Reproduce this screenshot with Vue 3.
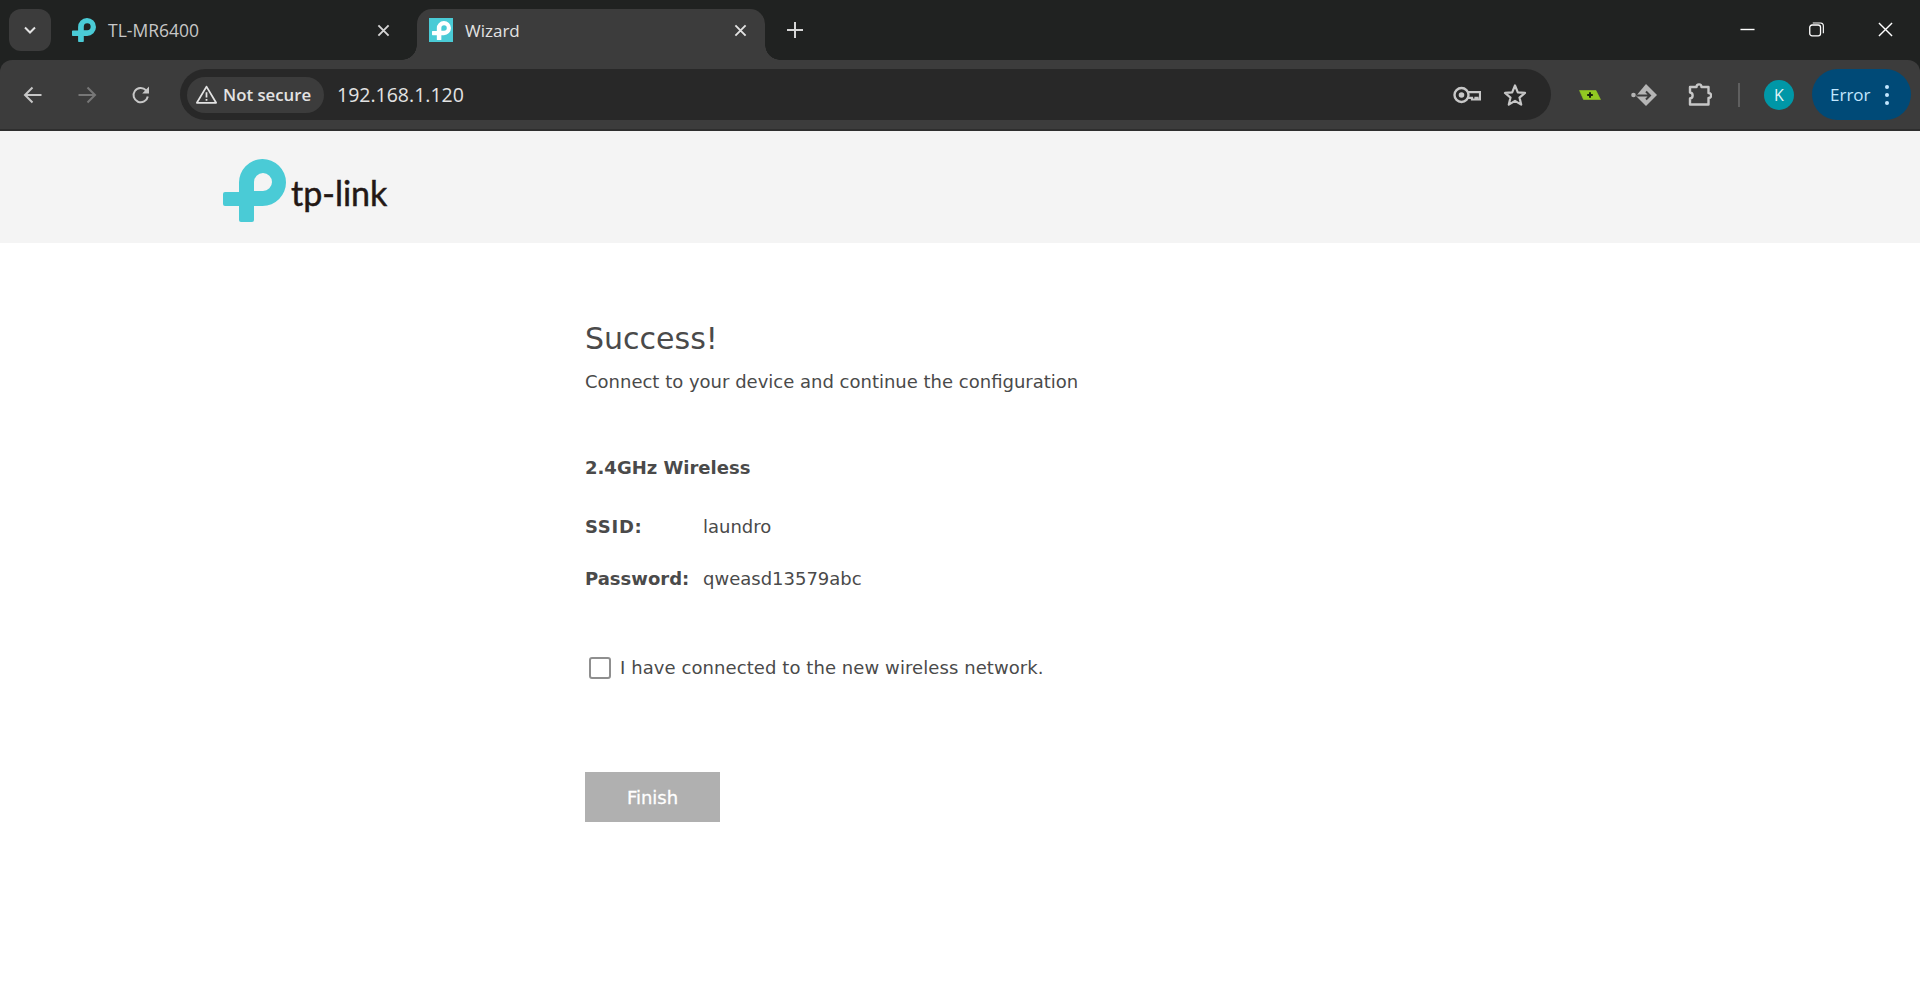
<script setup>
const logoPath = 'M16 24A23.5 23.5 0 1 1 39.5 47H31V61Q31 63 29 63H18Q16 63 16 61V47H2Q0 47 0 45V35Q0 33 2 33H16ZM31 32H40A9 9 0 1 0 31 23Z'
</script>

<template>
  <div class="app">
    <div class="chrome">
      <div class="tabstrip">
        <button class="tabsearch">
          <svg width="16" height="16" viewBox="0 0 16 16"><path d="M3 5.5 8 10.5 13 5.5" fill="none" stroke="#e3e3e3" stroke-width="2"/></svg>
        </button>
        <div class="tab first">
          <svg class="fav" viewBox="0 0 63 63"><path :d="logoPath" fill="#4acbd6" fill-rule="evenodd"/></svg>
          <span class="tabtitle">TL-MR6400</span>
          <svg class="tabclose" viewBox="0 0 14 14"><path d="M1.5 1.5 12.5 12.5M12.5 1.5 1.5 12.5" stroke="#d6d6d6" stroke-width="2"/></svg>
        </div>
        <div class="tab active">
          <span class="favbox">
            <svg viewBox="0 0 63 63"><path :d="logoPath" fill="#fff" fill-rule="evenodd"/></svg>
          </span>
          <span class="tabtitle">Wizard</span>
          <svg class="tabclose" viewBox="0 0 14 14"><path d="M1.5 1.5 12.5 12.5M12.5 1.5 1.5 12.5" stroke="#e3e3e3" stroke-width="2"/></svg>
        </div>
        <svg class="newtab" viewBox="0 0 16 16"><path d="M8 0V16M0 8H16" stroke="#d6d6d6" stroke-width="2"/></svg>
        <div class="winctl">
          <svg viewBox="0 0 16 16"><path d="M0.5 8H15.5" stroke="#fff" stroke-width="1.5"/></svg>
          <svg viewBox="0 0 16 16"><rect x="0.8" y="3.2" width="11.5" height="11.5" rx="2.5" fill="none" stroke="#fff" stroke-width="1.4"/><path d="M4 1H12.5A3 3 0 0 1 15.3 4V12" fill="none" stroke="#fff" stroke-width="1.2"/></svg>
          <svg viewBox="0 0 16 16"><path d="M1 1 15 15M15 1 1 15" stroke="#fff" stroke-width="1.5"/></svg>
        </div>
      </div>

      <div class="toolbar">
        <svg class="nav" viewBox="0 0 20 20"><path d="M18.5 10H2M9.5 2.5 2 10 9.5 17.5" fill="none" stroke="#c7c7c7" stroke-width="2"/></svg>
        <svg class="nav" viewBox="0 0 20 20"><path d="M1.5 10H18M10.5 2.5 18 10 10.5 17.5" fill="none" stroke="#777" stroke-width="2"/></svg>
        <svg class="nav" viewBox="0 0 20 20"><path d="M16.8 11.5A7.2 7.2 0 1 1 15 5.2L17.2 7.4" fill="none" stroke="#c7c7c7" stroke-width="2"/><path d="M18 1.5V8.4H11.2Z" fill="#c7c7c7"/></svg>
        <div class="omnibox">
          <div class="chip">
            <svg width="23" height="21" viewBox="0 0 26 24"><path d="M13 3 24 21.5H2Z" fill="none" stroke="#e3e3e3" stroke-width="2" stroke-linejoin="round"/><path d="M13 9.5V15.5M13 17V19" stroke="#e3e3e3" stroke-width="2"/></svg>
            <span>Not secure</span>
          </div>
          <span class="url">192.168.1.120</span>
          <svg class="key" viewBox="0 0 28 20"><circle cx="8.5" cy="10" r="7" fill="none" stroke="#c7c7c7" stroke-width="2.4"/><circle cx="8.5" cy="10" r="2.8" fill="#c7c7c7"/><path d="M15 7.2H27V14.5H24.5V12.8H22.5V14.5H19V12.8H15" fill="none" stroke="#c7c7c7" stroke-width="2.2"/></svg>
          <svg class="star" viewBox="0 0 24 24"><path d="M12 2.5 14.8 9.3 22 9.9 16.5 14.6 18.2 21.6 12 17.9 5.8 21.6 7.5 14.6 2 9.9 9.2 9.3Z" fill="none" stroke="#c7c7c7" stroke-width="2.2" stroke-linejoin="round"/></svg>
        </div>
        <svg class="ext green" viewBox="0 0 22 10"><path d="M0.5 0.5H17L21.5 9.5H4.5Z" fill="#92c822" stroke="#92c822" stroke-width="0.6" stroke-linejoin="round"/><path d="M11 2.2V7.8M8.2 5H13.8" stroke="#16200c" stroke-width="2"/></svg>
        <svg class="ext diamond" viewBox="0 0 26 24"><circle cx="2.5" cy="12" r="2.3" fill="#b5b5b5"/><path d="M15 1 26 12 15 23 5 13Z" fill="#b5b5b5"/><path d="M5.5 12.5H18.5M15 8.5 19 12.5 15 16.5" fill="none" stroke="#3c3c3c" stroke-width="2"/></svg>
        <svg class="ext puzzle" viewBox="0 0 24 24"><path d="M2 4H8.5C8.5 0.5 13.5 0.5 13.5 4H20.5V10C24 10 24 15 20.5 15V21.5H2V15.5C5.5 15 5.5 10 2 9.5Z" fill="none" stroke="#c7c7c7" stroke-width="2.4" stroke-linejoin="round"/></svg>
        <span class="sep"></span>
        <span class="avatar">K</span>
        <div class="error">
          <span>Error</span>
          <span class="dots"><i></i><i></i><i></i></span>
        </div>
      </div>
    </div>

    <div class="page">
      <header class="pagehead">
        <svg class="logo" viewBox="0 0 63 63"><path :d="logoPath" fill="#4acbd6" fill-rule="evenodd"/></svg>
        <span class="wordmark">tp-link</span>
      </header>
      <main class="content">
        <h1>Success!</h1>
        <p class="sub">Connect to your device and continue the configuration</p>
        <h2>2.4GHz Wireless</h2>
        <div class="row ssid"><b>SSID:</b><span>laundro</span></div>
        <div class="row pass"><b>Password:</b><span>qweasd13579abc</span></div>
        <label class="check"><span class="box"></span><span>I have connected to the new wireless network.</span></label>
        <button class="finish">Finish</button>
      </main>
    </div>
  </div>
</template>

<style scoped>
.app { width: 1920px; height: 1008px; overflow: hidden; background: #fff; display: flex; flex-direction: column; }
.chrome { background: #202221; flex: none; }
.tabstrip { height: 60px; display: flex; align-items: flex-start; }
.tabsearch { width: 42px; height: 42px; margin: 9px 0 0 9px; border: 0; border-radius: 12px; background: #3c3c3c; display: flex; align-items: center; justify-content: center; padding: 0; flex: none; }
.tab { height: 51px; margin-top: 9px; display: flex; align-items: center; padding: 0 0 9px 12px; box-sizing: border-box; position: relative; font: 400 17px "Open Sans", sans-serif; flex: none; }
.tab.first { width: 357px; margin-left: 9px; padding-right: 27px; color: #c7c7c7; }
.tab.active { width: 348px; padding-right: 18px; background: #3c3c3c; border-radius: 15px 15px 0 0; color: #e3e3e3; }
.tab.active::before, .tab.active::after { content: ""; position: absolute; bottom: 0; width: 15px; height: 15px; background: radial-gradient(circle at var(--c) 0, #202221 14.5px, #3c3c3c 15px); }
.tab.active::before { left: -15px; --c: 0; }
.tab.active::after { right: -15px; --c: 100%; }
.fav { width: 24px; height: 24px; flex: none; }
.favbox { width: 24px; height: 24px; flex: none; background: #4acbd6; display: flex; align-items: center; justify-content: center; }
.favbox svg { width: 19px; height: 19px; }
.tabtitle { margin-left: 12px; flex: 1; }
.first .tabtitle { font-size: 17.5px; }
.tabclose { width: 13px; height: 13px; flex: none; }
.newtab { width: 16px; height: 16px; margin: 22px 0 0 22px; flex: none; }
.winctl { margin-left: auto; display: flex; gap: 54px; padding: 22px 27px 0 0; }
.winctl svg { width: 15px; height: 15px; }
.toolbar { height: 69px; background: #3c3c3c; border-radius: 12px 12px 0 0; border-bottom: 2px solid #2e2e2e; display: flex; align-items: center; padding: 0 9px 0 23px; }
.nav { width: 20px; height: 20px; flex: none; margin-right: 34px; }
.omnibox { width: 1371px; height: 51px; flex: none; margin-left: -5px; border-radius: 26px; background: #282828; display: flex; align-items: center; padding: 0 24px 0 7px; box-sizing: border-box; font-family: "Open Sans", sans-serif; }
.chip { height: 36px; width: 137px; flex: none; border-radius: 18px; background: #3c3c3c; display: flex; align-items: center; padding-left: 8px; box-sizing: border-box; gap: 5px; color: #e3e3e3; font-weight: 600; font-size: 16.8px; }
.url { margin-left: 13px; flex: 1; font-size: 19.5px; color: #e3e3e3; }
.key { width: 28px; height: 20px; margin-right: 22px; }
.star { width: 24px; height: 24px; }
.ext { flex: none; }
.green { width: 22px; height: 10px; margin-left: 28px; }
.diamond { width: 26px; height: 24px; margin-left: 30px; }
.puzzle { width: 24px; height: 24px; margin-left: 31px; }
.sep { width: 2px; height: 24px; background: #5f5f5f; margin-left: 26px; flex: none; }
.avatar { width: 30px; height: 30px; border-radius: 50%; background: #0097a7; color: #e3f5f7; display: flex; align-items: center; justify-content: center; margin-left: 24px; font: 400 16px "Open Sans", sans-serif; flex: none; }
.error { width: 99px; height: 51px; margin-left: 18px; border-radius: 26px; background: #004a77; color: #c2e7ff; display: flex; align-items: center; font: 400 17px "Open Sans", sans-serif; padding-left: 18px; box-sizing: border-box; flex: none; }
.dots { display: flex; flex-direction: column; gap: 4px; margin-left: 14px; }
.dots i { display: block; width: 4px; height: 4px; border-radius: 50%; background: #c2e7ff; }
.page { flex: 1; background: #fff; }
.pagehead { height: 112px; background: #f4f4f4; display: flex; align-items: center; padding-left: 223px; box-sizing: border-box; }
.logo { width: 63px; height: 63px; margin-top: 6px; }
.wordmark { font: 400 34px Lato, sans-serif; -webkit-text-stroke: 0.5px #231815; color: #231815; margin-left: 5px; margin-top: 10px; }
.content { padding-left: 585px; font-family: "DejaVu Sans", sans-serif; color: #4a4a4a; font-size: 18px; display: flex; flex-direction: column; align-items: flex-start; }
h1 { margin: 76px 0 0; font-size: 30px; font-weight: 400; line-height: 40px; }
.sub { margin: 11px 0 0; line-height: 24px; }
h2 { margin: 62px 0 0; font-size: 18px; font-weight: 700; line-height: 24px; }
.row { display: flex; line-height: 24px; }
.row b { width: 118px; flex: none; }
.ssid b { letter-spacing: 0.7px; }
.ssid { margin-top: 35px; }
.pass { margin-top: 28px; }
.check { display: flex; align-items: center; margin: 65px 0 0 4px; line-height: 24px; letter-spacing: 0.08px; }
.box { width: 18px; height: 18px; border: 2px solid #8f8f8f; border-radius: 3px; background: #fff; margin-right: 9px; flex: none; }
.finish { margin-top: 92px; width: 135px; height: 50px; border: 0; background: #b0b0b0; color: #fff; font: 400 18px "DejaVu Sans", sans-serif; -webkit-text-stroke: 0.3px #fff; padding: 0; }
</style>
